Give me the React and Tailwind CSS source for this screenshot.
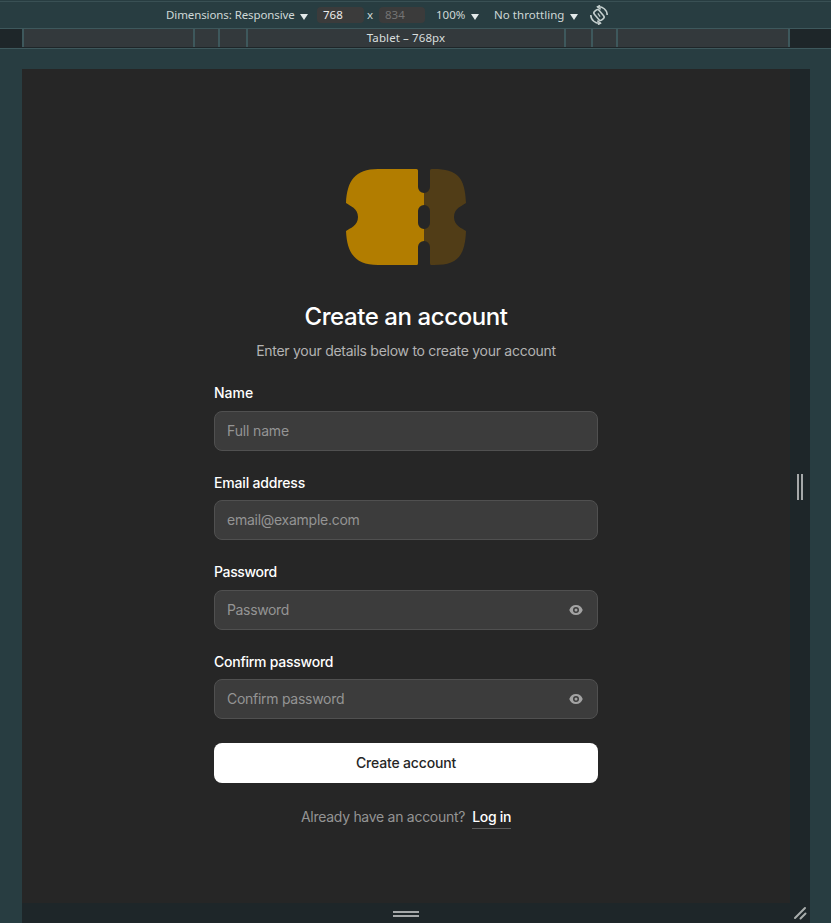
import React from 'react';

const Caret = () => (
  <svg className="mt-[4px] h-[6px] w-[8px] shrink-0" viewBox="0 0 8 6">
    <path d="M0 0h8L4 6z" fill="#e3eaea" />
  </svg>
);

const RotateIcon = () => (
  <svg className="h-5 w-5 shrink-0" viewBox="0 0 20 20" fill="none" stroke="#c4cfce" strokeWidth="1.6">
    <rect x="7" y="4.4" width="6" height="11.2" rx="2" transform="rotate(-40 10 10)" />
    <path d="M8.9 8.4l2.2 3.2" strokeWidth="1.2" />
    <path d="M8.5 1.9C13.5 1 18.2 5 18.2 10M11.5 18.1C6.5 19 1.8 15 1.8 10" />
    <path d="M11.6 4.4L8.6 1.9l2.4-1.5M8.4 15.6l3 2.5-2.4 1.5" />
  </svg>
);

const Logo = () => (
  <svg className="h-24 w-[120px]" viewBox="0 0 120 96">
    <path
      fill="#b27d00"
      d="M0 34C1 12 9 0 32 0H70.5Q72 0 72 1.5V18A6 6 0 0 0 78 24V36A6 6 0 0 0 72 42V54A6 6 0 0 0 78 60V72A6 6 0 0 0 72 78V94.5Q72 96 70.5 96H32C9 96 1 84 0 62C4 59 12 57 12 48C12 39 4 37 0 34Z"
    />
    <path
      fill="#513d17"
      d="M85.5 0Q84 0 84 1.5V18A6 6 0 0 1 78 24V36A6 6 0 0 1 84 42V54A6 6 0 0 1 78 60V72A6 6 0 0 1 84 78V94.5Q84 96 85.5 96H88C111 96 119 88 120 62C116 59 108 57 108 48C108 39 116 37 120 34C119 8 111 0 88 0Z"
    />
  </svg>
);

const Eye = () => (
  <svg className="h-4 w-4" viewBox="0 0 16 16" fill="#a3a3a3">
    <path d="M8 9.5a1.5 1.5 0 1 0 0-3 1.5 1.5 0 0 0 0 3Z" />
    <path
      fillRule="evenodd"
      clipRule="evenodd"
      d="M1.38 8.28a.87.87 0 0 1 0-.566 7.003 7.003 0 0 1 13.238.006.87.87 0 0 1 0 .566A7.003 7.003 0 0 1 1.379 8.28ZM11 8a3 3 0 1 1-6 0 3 3 0 0 1 6 0Z"
    />
  </svg>
);

function Field({ label, placeholder, labelClass, textClass, eye }) {
  return (
    <div>
      <div className="mb-2 flex h-[17.5px] items-center pb-[1px]">
        <span className={`whitespace-nowrap text-sm leading-4 font-medium text-white ${labelClass}`}>{label}</span>
      </div>
      <div className="flex h-10 items-center justify-between rounded-lg border border-[#505050] bg-[#3c3c3c] pr-[13px] pl-3">
        <span className={`whitespace-nowrap text-sm text-[#949494] ${textClass}`}>{placeholder}</span>
        {eye && <Eye />}
      </div>
    </div>
  );
}

function Toolbar() {
  return (
    <header className="border-b border-b-[#3e585c] bg-[#283d41] pt-px">
      <div className="flex h-[27px] items-center border-t border-t-[#395054] pl-[166px] font-['Noto_Sans',sans-serif] text-[11.5px] text-[#cfd8d7]">
        <span className="w-[134px] whitespace-nowrap tracking-[-0.1px]">Dimensions: Responsive</span>
        <Caret />
        <span className="ml-[9px] h-4 w-[47px] rounded bg-[#3b3b3b] pl-[6px] leading-4 text-[#ececec]">768</span>
        <span className="ml-[3px] w-[9px]">x</span>
        <span className="ml-[3px] h-4 w-[46px] rounded bg-[#3b3b3b] pl-[6px] leading-4 text-[#747474]">834</span>
        <span className="ml-[11px] w-[35px]">100%</span>
        <Caret />
        <span className="ml-[15px] w-[76px] whitespace-nowrap tracking-[0.05px]">No throttling</span>
        <Caret />
        <span className="ml-[11px]"><RotateIcon /></span>
      </div>
    </header>
  );
}

function Ruler() {
  return (
    <div className="flex h-[18px] bg-[#33393c] font-['Noto_Sans',sans-serif] text-[11.5px] text-[#d9dede]">
      <div className="w-[22px] bg-[#1e2629]" />
      <div className="w-[171px] border-l-2 border-[#3e585c]" />
      <div className="w-[25px] border-l-2 border-[#3e585c]" />
      <div className="w-[28px] border-l-2 border-[#3e585c]" />
      <div className="flex w-[318px] items-center justify-center border-l-2 border-[#3e585c] leading-none tracking-[0.1px]">Tablet – 768px</div>
      <div className="w-[27px] border-l-2 border-[#3e585c]" />
      <div className="w-[25px] border-l-2 border-[#3e585c]" />
      <div className="w-[174px] border-x-2 border-[#3e585c]" />
      <div className="flex-1 bg-[#1e2629]" />
    </div>
  );
}

export default function App() {
  return (
    <div className="flex h-[923px] w-[831px] flex-col overflow-hidden bg-[#283d41] font-[Inter,sans-serif]">
      <Toolbar />
      <Ruler />
      <div className="h-[2px] border-b border-[#3e585c] bg-[#1e2629]" />
      <div className="mt-5 ml-[22px] flex h-[834px] w-[788px]">
        <main className="flex w-[768px] flex-col items-center bg-[#262626] pt-[100px]">
          <Logo />
          <h1 className="mt-9 whitespace-nowrap text-2xl leading-8 font-medium tracking-[-0.42px] text-white">Create an account</h1>
          <p className="mt-2 whitespace-nowrap text-sm leading-5 tracking-[-0.27px] text-[#b3b3b3]">Enter your details below to create your account</p>
          <div className="mt-6 flex w-96 flex-col gap-6">
            <Field label="Name" placeholder="Full name" labelClass="tracking-[0px]" textClass="tracking-[-0.15px]" />
            <Field label="Email address" placeholder="email@example.com" labelClass="tracking-[-0.17px]" textClass="tracking-[-0.26px]" />
            <Field label="Password" placeholder="Password" labelClass="tracking-[-0.35px]" textClass="tracking-[-0.35px]" eye />
            <Field label="Confirm password" placeholder="Confirm password" labelClass="tracking-[-0.25px]" textClass="tracking-[-0.28px]" eye />
            <button className="h-10 rounded-lg bg-white text-sm font-medium tracking-[-0.17px] text-[#262626]">Create account</button>
          </div>
          <div className="mt-6 flex gap-[7px] text-sm leading-5 whitespace-nowrap">
            <span className="tracking-[-0.28px] text-[#949494]">Already have an account?</span>
            <span className="border-b border-[#5c5c5c] pb-px font-medium tracking-[-0.3px] text-white">Log in</span>
          </div>
        </main>
        <aside className="flex w-5 items-center justify-center gap-[2px] bg-[#1e2629] pt-[2px]">
          <div className="h-[26px] w-[2px] bg-[#a5a8a9]" />
          <div className="h-[26px] w-[2px] bg-[#a5a8a9]" />
        </aside>
      </div>
      <footer className="ml-[22px] flex h-5 w-[788px] bg-[#1e2629]">
        <div className="flex w-[768px] flex-col items-center justify-center gap-[2px] pt-[2px]">
          <div className="h-[2px] w-[26px] bg-[#a5a8a9]" />
          <div className="h-[2px] w-[26px] bg-[#a5a8a9]" />
        </div>
        <svg className="h-5 w-5" viewBox="0 0 20 20" stroke="#a9adac" strokeWidth="2" strokeLinecap="round">
          <path d="M5 15L15 5M10.5 15.5L15.5 10.5" />
        </svg>
      </footer>
    </div>
  );
}
